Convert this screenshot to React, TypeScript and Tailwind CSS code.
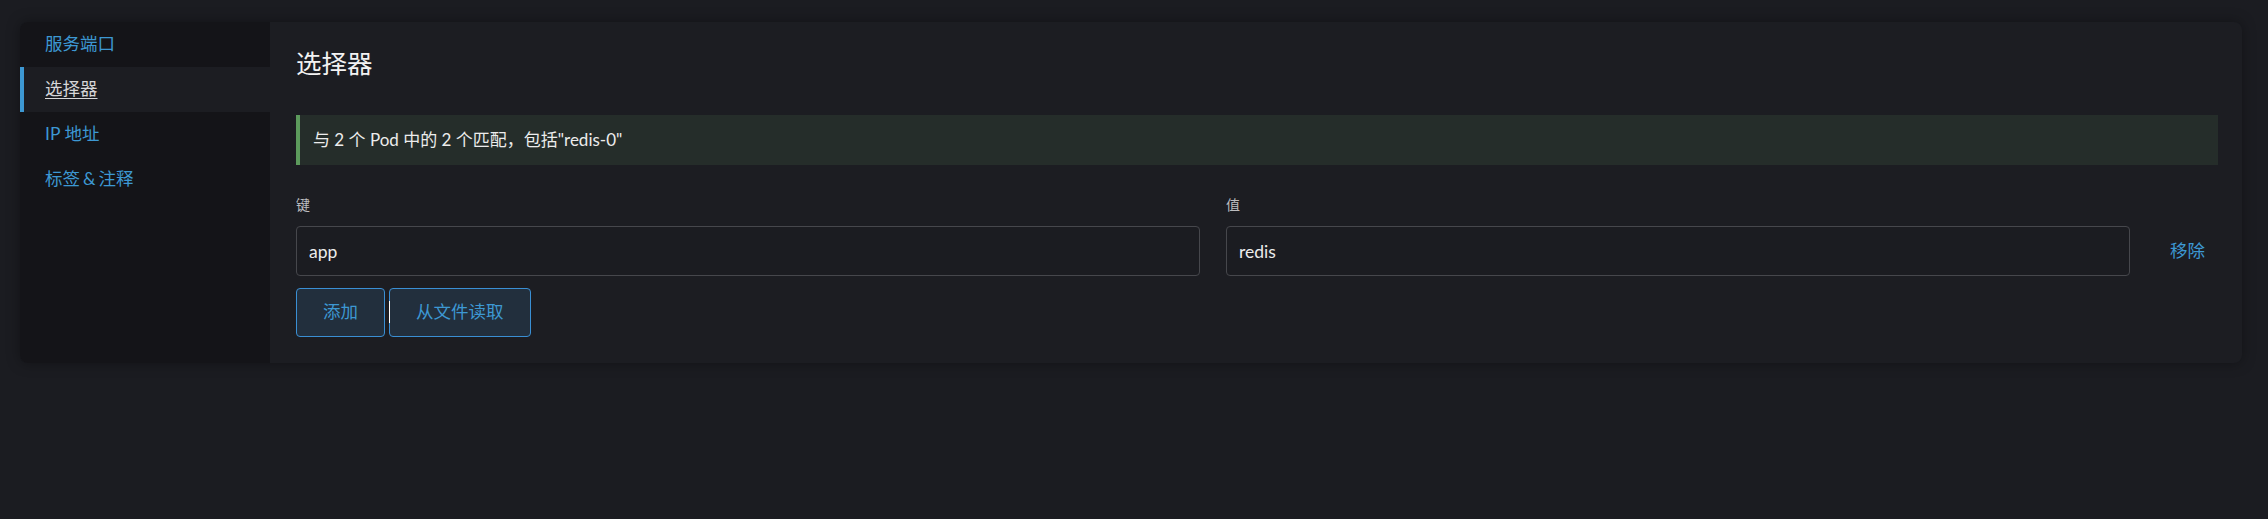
import { useState } from "react";

const font = { fontFamily: 'Lato, "Noto Sans CJK SC", sans-serif' };

const navItems = ["服务端口", "选择器", "IP 地址", "标签&注释"];

export default function App() {
  const [active, setActive] = useState(1);
  const [rows, setRows] = useState([{ key: "app", value: "redis" }]);

  return (
    <div className="min-h-[519px] w-full bg-[#1b1c21] pt-[22px] pl-[20px] pr-[26px]" style={font}>
      {/* Card */}
      <div className="flex min-h-[341px] rounded-[8px] bg-[#1c1d22] shadow-[0_0_14px_rgba(0,0,0,0.35)]">
        {/* Side tabs */}
        <div className="w-[250px] shrink-0 rounded-l-[8px] bg-[#141418]">
          {navItems.map((item, i) => (
            <div
              key={item}
              onClick={() => setActive(i)}
              className={
                i === active
                  ? "flex h-[45px] cursor-pointer items-center border-l-4 border-[#3d98d3] bg-[#1c1d22] pl-[21px] text-[17.5px] text-[#d6d6d8] underline underline-offset-[3px]"
                  : "flex h-[45px] cursor-pointer items-center pl-[25px] text-[17.5px] text-[#3d98d3]"
              }
            >
              {item.includes("&") ? (
                <>
                  标签<span className="mx-[3px]">&amp;</span>注释
                </>
              ) : (
                item
              )}
            </div>
          ))}
        </div>

        {/* Main */}
        <div className="flex-1 pl-[26px] pr-[24px] pt-[21px] pb-[26px]">
          <div className="mb-[32px] flex h-[40px] items-center text-[25.5px] text-[#f2f2f2]">选择器</div>

          <div className="flex h-[50px] items-center border-l-4 border-[#5c9a5c] bg-[#252d2a] pl-[13px] text-[17px] text-[#ececec]">
            与 2 个 Pod 中的 2 个匹配，包括"redis-0"
          </div>

          <div className="mt-[25px] flex">
            <div className="flex-1 text-[14px] leading-[30px] text-[#bdbdc0]">键</div>
            <div className="ml-[26px] flex-1 text-[14px] leading-[30px] text-[#bdbdc0]">值</div>
            <div className="w-[88px]" />
          </div>

          {rows.map((row, i) => (
            <div key={i} className="mt-[6px] flex items-center">
              <input
                value={row.key}
                onChange={(e) => setRows(rows.map((r, j) => (j === i ? { ...r, key: e.target.value } : r)))}
                className="h-[50px] min-w-0 flex-1 rounded-[4px] border border-[#46474c] bg-[#1b1c21] px-[12px] text-[17.5px] text-[#ececec] outline-none"
              />
              <input
                value={row.value}
                onChange={(e) => setRows(rows.map((r, j) => (j === i ? { ...r, value: e.target.value } : r)))}
                className="ml-[26px] h-[50px] min-w-0 flex-1 rounded-[4px] border border-[#46474c] bg-[#1b1c21] px-[12px] text-[17.5px] text-[#ececec] outline-none"
              />
              <div className="flex w-[88px] justify-end pr-[13px]">
                <button
                  onClick={() => setRows(rows.filter((_, j) => j !== i))}
                  className="text-[17.5px] text-[#3d98d3]"
                >
                  移除
                </button>
              </div>
            </div>
          ))}

          <div className="mt-[12px] flex gap-[4px]">
            <button
              onClick={() => setRows([...rows, { key: "", value: "" }])}
              className="h-[49px] rounded-[4px] border border-[#3a8fd4] bg-[#222f3d] px-[26px] text-[17.5px] text-[#3d98d3]"
            >
              添加
            </button>
            <button className="relative h-[49px] rounded-[4px] border border-[#3a8fd4] bg-[#222f3d] px-[26px] text-[17.5px] text-[#3d98d3]">
              <span className="absolute left-[-1px] top-[12px] h-[22px] w-[1px] bg-white" />
              从文件读取
            </button>
          </div>
        </div>
      </div>
    </div>
  );
}
